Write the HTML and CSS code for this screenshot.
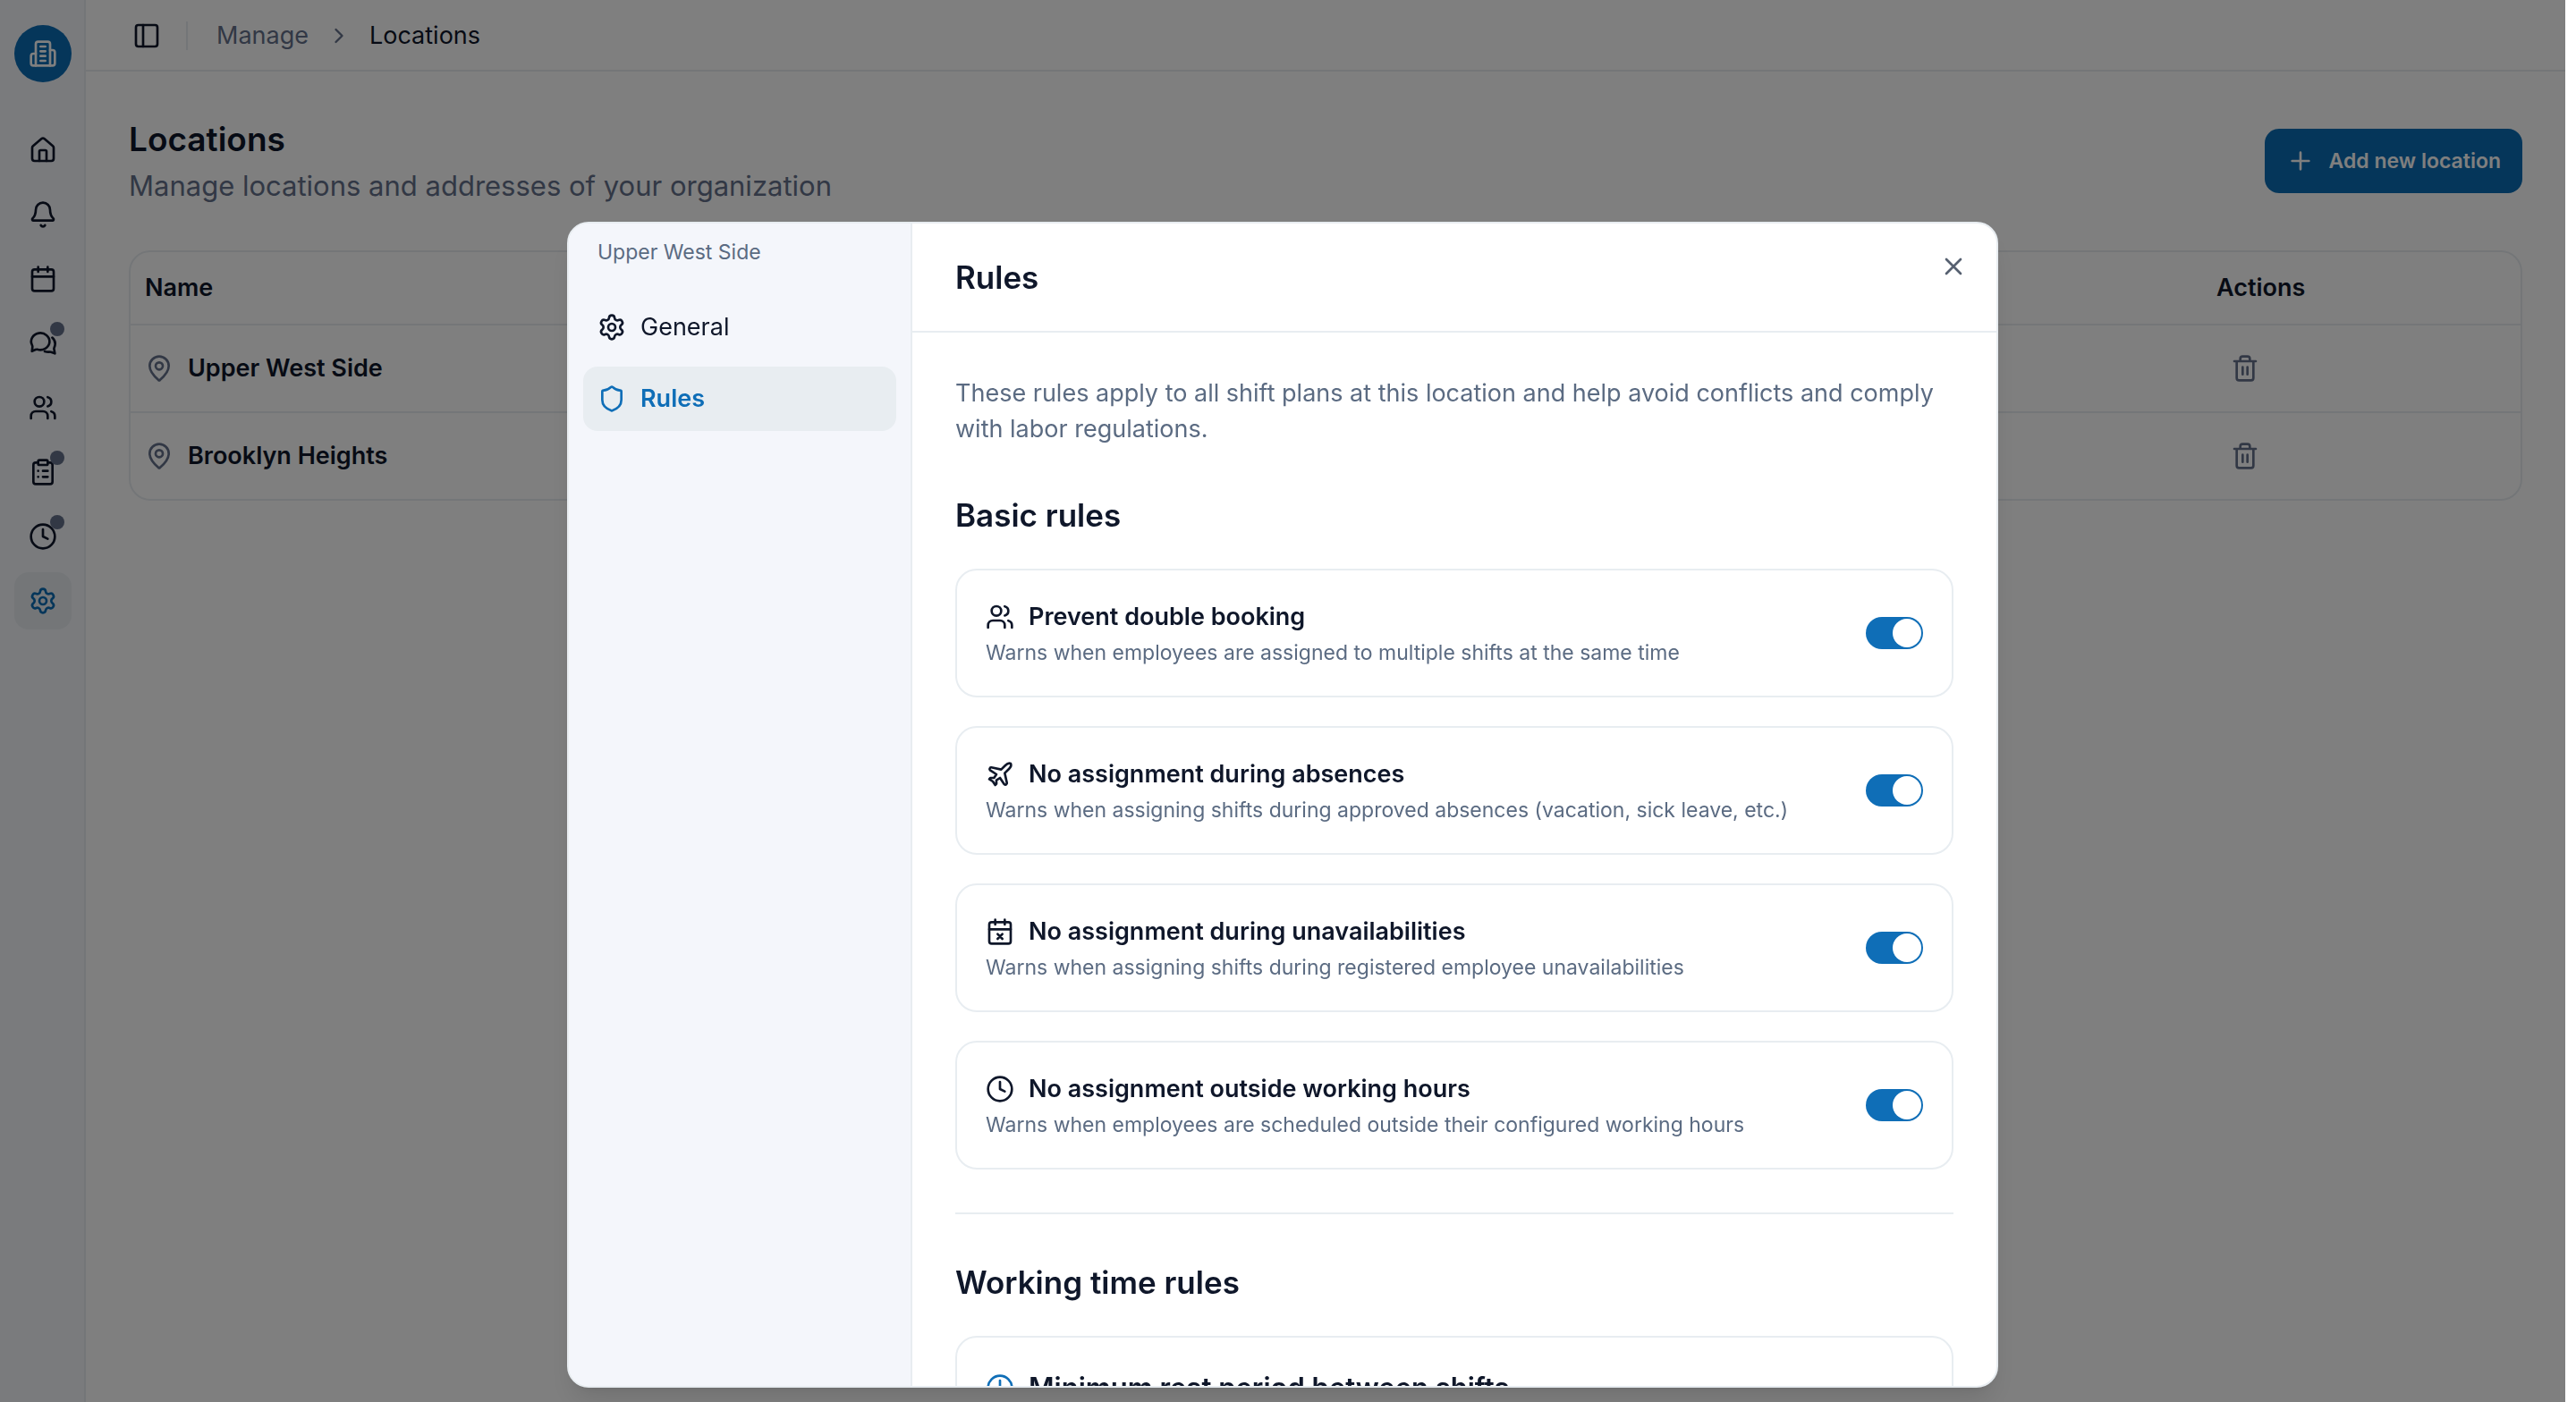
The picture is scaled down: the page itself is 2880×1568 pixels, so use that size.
FILE: index.html
```html
<!DOCTYPE html>
<html lang="en">
<head>
  <meta charset="UTF-8">
  <title>Locations</title>
  <link rel="stylesheet" href="styles.css">
</head>
<body>

<!-- shared icons -->
<svg class="sprite" aria-hidden="true">
  <symbol id="i-building" viewBox="0 0 24 24">
    <path d="M6 22V4a2 2 0 0 1 2-2h8a2 2 0 0 1 2 2v18Z"/>
    <path d="M6 12H4a2 2 0 0 0-2 2v6a2 2 0 0 0 2 2h2"/>
    <path d="M18 9h2a2 2 0 0 1 2 2v9a2 2 0 0 1-2 2h-2"/>
    <path d="M10 6h4M10 10h4M10 14h4M10 18h4"/>
  </symbol>
  <symbol id="i-home" viewBox="0 0 24 24">
    <path d="M15 21v-8a1 1 0 0 0-1-1h-4a1 1 0 0 0-1 1v8"/>
    <path d="M3 10a2 2 0 0 1 .709-1.528l7-5.999a2 2 0 0 1 2.582 0l7 5.999A2 2 0 0 1 21 10v9a2 2 0 0 1-2 2H5a2 2 0 0 1-2-2z"/>
  </symbol>
  <symbol id="i-bell" viewBox="0 0 24 24">
    <path d="M10.268 21a2 2 0 0 0 3.464 0"/>
    <path d="M3.262 15.326A1 1 0 0 0 4 17h16a1 1 0 0 0 .74-1.673C19.41 13.956 18 12.499 18 8A6 6 0 0 0 6 8c0 4.499-1.411 5.956-2.738 7.326"/>
  </symbol>
  <symbol id="i-calendar" viewBox="0 0 24 24">
    <path d="M8 2v4M16 2v4M3 10h18"/>
    <rect width="18" height="18" x="3" y="4" rx="2"/>
  </symbol>
  <symbol id="i-calendar-x" viewBox="0 0 24 24">
    <path d="M8 2v4M16 2v4M3 10h18M14 14l-4 4M10 14l4 4"/>
    <rect width="18" height="18" x="3" y="4" rx="2"/>
  </symbol>
  <symbol id="i-chat" viewBox="0 0 24 24">
    <path d="M7.2 17.1a7.7 7.1 0 1 0-4.3-3.6c.3.6.4 1 .3 1.6L2.8 18.6l3-1.3c.5-.2.9-.3 1.4-.2z"/>
    <path d="M19.8 7.2a7.3 7.3 0 0 1 1.7 8.3c-.3.7-.3 1.1-.1 1.7l.6 3.3-3.2-1.2c-.5-.2-.9-.2-1.4-.1a9 9 0 0 1-3.9-.4"/>
  </symbol>
  <symbol id="i-users" viewBox="0 0 24 24">
    <path d="M16 21v-2a4 4 0 0 0-4-4H6a4 4 0 0 0-4 4v2"/>
    <path d="M16 3.128a4 4 0 0 1 0 7.744M22 21v-2a4 4 0 0 0-3-3.87"/>
    <circle cx="9" cy="7" r="4"/>
  </symbol>
  <symbol id="i-clipboard" viewBox="0 0 24 24">
    <rect width="8" height="4" x="8" y="2" rx="1"/>
    <path d="M16 4h2a2 2 0 0 1 2 2v14a2 2 0 0 1-2 2H6a2 2 0 0 1-2-2V6a2 2 0 0 1 2-2h2"/>
    <path d="M12 11h4M12 16h4M8 11h.01M8 16h.01"/>
  </symbol>
  <symbol id="i-clock" viewBox="0 0 24 24">
    <circle cx="12" cy="12" r="10"/>
    <path d="M12 6v6l4 2"/>
  </symbol>
  <symbol id="i-settings" viewBox="0 0 24 24">
    <path d="M9.671 4.136a2.34 2.34 0 0 1 4.659 0 2.34 2.34 0 0 0 3.319 1.915 2.34 2.34 0 0 1 2.33 4.033 2.34 2.34 0 0 0 0 3.831 2.34 2.34 0 0 1-2.33 4.033 2.34 2.34 0 0 0-3.319 1.915 2.34 2.34 0 0 1-4.659 0 2.34 2.34 0 0 0-3.32-1.915 2.34 2.34 0 0 1-2.33-4.033 2.34 2.34 0 0 0 0-3.831A2.34 2.34 0 0 1 6.35 6.051a2.34 2.34 0 0 0 3.319-1.915"/>
    <circle cx="12" cy="12" r="3"/>
  </symbol>
  <symbol id="i-panel" viewBox="0 0 24 24">
    <rect width="18" height="18" x="3" y="3" rx="2"/>
    <path d="M9 3v18"/>
  </symbol>
  <symbol id="i-chevron" viewBox="0 0 24 24"><path d="m9 18 6-6-6-6"/></symbol>
  <symbol id="i-plus" viewBox="0 0 24 24"><path d="M5 12h14M12 5v14"/></symbol>
  <symbol id="i-close" viewBox="0 0 24 24"><path d="M18 6 6 18M6 6l12 12"/></symbol>
  <symbol id="i-pin" viewBox="0 0 24 24">
    <path d="M20 10c0 4.993-5.539 10.193-7.399 11.799a1 1 0 0 1-1.202 0C9.539 20.193 4 14.993 4 10a8 8 0 0 1 16 0"/>
    <circle cx="12" cy="10" r="3"/>
  </symbol>
  <symbol id="i-trash" viewBox="0 0 24 24">
    <path d="M3 6h18M19 6v14a2 2 0 0 1-2 2H7a2 2 0 0 1-2-2V6M8 6V4a2 2 0 0 1 2-2h4a2 2 0 0 1 2 2v2M10 11v6M14 11v6"/>
  </symbol>
  <symbol id="i-shield" viewBox="0 0 24 24">
    <path d="M20 13c0 5-3.5 7.5-7.66 8.95a1 1 0 0 1-.67-.01C7.5 20.5 4 18 4 13V6a1 1 0 0 1 1-1c2 0 4.5-1.2 6.24-2.72a1.17 1.17 0 0 1 1.52 0C14.51 3.81 17 5 19 5a1 1 0 0 1 1 1z"/>
  </symbol>
  <symbol id="i-plane" viewBox="0 0 24 24">
    <path d="M17.8 19.2 16 11l3.5-3.5C21 6 21.5 4 21 3c-1-.5-3 0-4.5 1.5L13 8 4.8 6.2c-.5-.1-.9.1-1.1.5l-.3.5c-.2.5-.1 1 .3 1.3L9 12l-2 3H4l-1 1 3 2 2 3 1-1v-3l3-2 3.5 5.3c.3.4.8.5 1.3.3l.5-.2c.4-.3.6-.7.5-1.2z"/>
  </symbol>
</svg>

<div class="app">
  <nav class="sidebar" aria-label="Main">
    <a href="#" class="logo" aria-label="Organization"><svg class="icon"><use href="#i-building"/></svg></a>
    <div class="sidebar-menu">
      <a href="#" class="sidebar-item" aria-label="Home"><svg class="icon"><use href="#i-home"/></svg></a>
      <a href="#" class="sidebar-item" aria-label="Notifications"><svg class="icon"><use href="#i-bell"/></svg></a>
      <a href="#" class="sidebar-item" aria-label="Calendar"><svg class="icon"><use href="#i-calendar"/></svg></a>
      <a href="#" class="sidebar-item has-dot" aria-label="Messages"><svg class="icon"><use href="#i-chat"/></svg></a>
      <a href="#" class="sidebar-item" aria-label="Employees"><svg class="icon"><use href="#i-users"/></svg></a>
      <a href="#" class="sidebar-item has-dot" aria-label="Tasks"><svg class="icon"><use href="#i-clipboard"/></svg></a>
      <a href="#" class="sidebar-item has-dot" aria-label="Time"><svg class="icon"><use href="#i-clock"/></svg></a>
      <a href="#" class="sidebar-item active" aria-label="Manage"><svg class="icon"><use href="#i-settings"/></svg></a>
    </div>
  </nav>

  <div class="content">
    <header class="topbar">
      <button type="button" class="icon-btn" aria-label="Toggle sidebar"><svg class="icon"><use href="#i-panel"/></svg></button>
      <span class="topbar-line"></span>
      <a href="#" class="crumb">Manage</a>
      <svg class="icon icon-sm"><use href="#i-chevron"/></svg>
      <span class="crumb current">Locations</span>
    </header>

    <main class="page">
      <div class="page-head">
        <div>
          <h1>Locations</h1>
          <p>Manage locations and addresses of your organization</p>
        </div>
        <button type="button" class="btn-primary"><svg class="icon"><use href="#i-plus"/></svg>Add new location</button>
      </div>

      <div class="table-wrap">
        <table>
          <thead>
            <tr><th>Name</th><th class="col-actions">Actions</th></tr>
          </thead>
          <tbody>
            <tr>
              <td><div class="location"><svg class="icon"><use href="#i-pin"/></svg>Upper West Side</div></td>
              <td><button type="button" class="icon-btn delete" aria-label="Delete"><svg class="icon"><use href="#i-trash"/></svg></button></td>
            </tr>
            <tr>
              <td><div class="location"><svg class="icon"><use href="#i-pin"/></svg>Brooklyn Heights</div></td>
              <td><button type="button" class="icon-btn delete" aria-label="Delete"><svg class="icon"><use href="#i-trash"/></svg></button></td>
            </tr>
          </tbody>
        </table>
      </div>
    </main>
  </div>
</div>

<div class="overlay">
  <div class="modal" role="dialog" aria-modal="true" aria-labelledby="modal-title">
    <aside class="modal-side">
      <div class="modal-side-label">Upper West Side</div>
      <nav class="modal-nav" aria-label="Location settings">
        <a href="#"><svg class="icon"><use href="#i-settings"/></svg>General</a>
        <a href="#" class="active"><svg class="icon"><use href="#i-shield"/></svg>Rules</a>
      </nav>
    </aside>

    <section class="modal-main">
      <header class="modal-head">
        <h2 id="modal-title">Rules</h2>
        <button type="button" class="modal-close" aria-label="Close"><svg class="icon"><use href="#i-close"/></svg></button>
      </header>

      <div class="modal-body">
        <p class="intro">These rules apply to all shift plans at this location and help avoid conflicts and comply with labor regulations.</p>

        <section class="rules">
          <h3>Basic rules</h3>

          <div class="rule">
            <div class="rule-text">
              <label for="rule-double" class="rule-title"><svg class="icon"><use href="#i-users"/></svg>Prevent double booking</label>
              <p>Warns when employees are assigned to multiple shifts at the same time</p>
            </div>
            <input type="checkbox" class="switch" id="rule-double" checked>
          </div>

          <div class="rule">
            <div class="rule-text">
              <label for="rule-absence" class="rule-title"><svg class="icon"><use href="#i-plane"/></svg>No assignment during absences</label>
              <p>Warns when assigning shifts during approved absences (vacation, sick leave, etc.)</p>
            </div>
            <input type="checkbox" class="switch" id="rule-absence" checked>
          </div>

          <div class="rule">
            <div class="rule-text">
              <label for="rule-unavailable" class="rule-title"><svg class="icon"><use href="#i-calendar-x"/></svg>No assignment during unavailabilities</label>
              <p>Warns when assigning shifts during registered employee unavailabilities</p>
            </div>
            <input type="checkbox" class="switch" id="rule-unavailable" checked>
          </div>

          <div class="rule">
            <div class="rule-text">
              <label for="rule-hours" class="rule-title"><svg class="icon"><use href="#i-clock"/></svg>No assignment outside working hours</label>
              <p>Warns when employees are scheduled outside their configured working hours</p>
            </div>
            <input type="checkbox" class="switch" id="rule-hours" checked>
          </div>
        </section>

        <hr>

        <section class="rules">
          <h3>Working time rules</h3>

          <div class="rule">
            <h4 class="rule-heading"><svg class="icon"><use href="#i-clock"/></svg>Minimum rest period between shifts</h4>
          </div>
        </section>
      </div>
    </section>
  </div>
</div>

</body>
</html>
```
FILE: styles.css
```css
* {
  box-sizing: border-box;
}

html,
body {
  height: 100%;
}

body {
  margin: 0;
  padding-right: 12px;
  overflow: hidden;
  background: #fff;
  color: #0f172a;
  font-family: Inter, "Liberation Sans", sans-serif;
  font-size: 27px;
  line-height: 40px;
}

h1, h2, h3, h4, p {
  margin: 0;
}

a {
  color: inherit;
  text-decoration: none;
}

button {
  padding: 0;
  border: none;
  background: none;
  color: inherit;
  font: inherit;
  cursor: pointer;
}

.sprite {
  display: none;
}

.icon {
  flex: none;
  display: block;
  width: 32px;
  height: 32px;
  fill: none;
  stroke: currentColor;
  stroke-width: 2;
  stroke-linecap: round;
  stroke-linejoin: round;
}

.icon-sm {
  width: 28px;
  height: 28px;
}

.icon-btn {
  display: flex;
  align-items: center;
  justify-content: center;
  width: 56px;
  height: 56px;
}

/* page */

.app {
  display: flex;
  min-height: 100%;
}

.sidebar {
  flex: none;
  width: 96px;
  padding: 28px 14px 28px 16px;
  border-right: 2px solid #e8edf1;
  background: #f4f6fb;
}

.logo {
  display: flex;
  align-items: center;
  justify-content: center;
  width: 64px;
  height: 64px;
  border-radius: 50%;
  background: #0b6cb4;
  color: #fff;
}

.sidebar-menu {
  display: flex;
  flex-direction: column;
  gap: 8px;
  margin-top: 44px;
}

.sidebar-item {
  position: relative;
  display: flex;
  align-items: center;
  justify-content: center;
  width: 64px;
  height: 64px;
  border-radius: 16px;
}

.sidebar-item.active {
  background: #e8edf1;
  color: #0b6cb4;
}

.has-dot::after {
  content: "";
  position: absolute;
  top: 8px;
  right: 8px;
  width: 16px;
  height: 16px;
  border-radius: 50%;
  background: #64708a;
}

.content {
  flex: 1;
  min-width: 0;
}

.topbar {
  display: flex;
  align-items: center;
  height: 80px;
  padding: 2px 0 0 40px;
  border-bottom: 2px solid #e8edf1;
  color: #64708a;
}

.topbar .icon-btn,
.crumb.current {
  color: #0f172a;
}

.topbar-line {
  width: 2px;
  height: 32px;
  margin: 0 32px 0 16px;
  background: #e8edf1;
}

.topbar .icon-sm {
  margin: 0 20px;
}

.page {
  padding: 48px;
}

.page-head {
  display: flex;
  align-items: center;
  justify-content: space-between;
  margin-bottom: 48px;
}

h1 {
  font-size: 37px;
  font-weight: 600;
  line-height: 56px;
}

.page-head p {
  color: #64708a;
  font-size: 31px;
  line-height: 48px;
}

.btn-primary {
  display: flex;
  align-items: center;
  gap: 16px;
  height: 72px;
  padding: 0 24px;
  border-radius: 16px;
  background: #0b6cb4;
  color: #fff;
  font-size: 23px;
  font-weight: 600;
}

.table-wrap {
  border: 2px solid #e8edf1;
  border-radius: 24px;
}

table {
  width: 100%;
  border-collapse: separate;
  border-spacing: 0;
  text-align: left;
}

th,
td {
  height: 98px;
  padding: 0 16px;
  border-bottom: 2px solid #e8edf1;
  font-weight: 600;
}

th {
  height: 82px;
}

tr:last-child td {
  height: 96px;
  border-bottom: none;
}

.col-actions {
  width: 356px;
}

.location {
  display: flex;
  align-items: center;
  gap: 16px;
}

.location .icon,
.delete {
  color: #64708a;
}

.delete {
  width: 64px;
  height: 64px;
}

/* modal */

.overlay {
  position: fixed;
  top: 0;
  right: 12px;
  bottom: 0;
  left: 0;
  display: flex;
  justify-content: center;
  padding: 248px 32px 16px;
  background: rgba(0, 0, 0, 0.5);
}

.modal {
  display: flex;
  width: 100%;
  max-width: 1600px;
  border: 2px solid #e8edf1;
  border-radius: 24px;
  overflow: hidden;
  background: #fff;
  box-shadow: 0 20px 30px -6px rgba(0, 0, 0, 0.1), 0 8px 12px -8px rgba(0, 0, 0, 0.1);
}

.modal-side {
  flex: none;
  width: 384px;
  padding: 0 16px;
  border-right: 2px solid #e8edf1;
  background: #f4f6fb;
}

.modal-side-label {
  padding: 0 16px;
  color: #5b6b82;
  font-size: 23px;
  line-height: 64px;
}

.modal-nav {
  display: flex;
  flex-direction: column;
  gap: 8px;
  margin-top: 16px;
}

.modal-nav a {
  display: flex;
  align-items: center;
  gap: 16px;
  height: 72px;
  padding: 0 16px;
  border-radius: 16px;
}

.modal-nav .active {
  background: #e8edf1;
  color: #0f6eb7;
  font-weight: 600;
}

.modal-main {
  flex: 1;
  display: flex;
  flex-direction: column;
  min-width: 0;
}

.modal-head {
  position: relative;
  flex: none;
  display: flex;
  align-items: center;
  height: 122px;
  padding: 0 48px;
  border-bottom: 2px solid #e8edf1;
}

h2,
h3 {
  font-size: 35px;
  font-weight: 600;
  line-height: 56px;
}

.modal-close {
  position: absolute;
  top: 32px;
  right: 32px;
  color: #566070;
}

.modal-body {
  flex: 1;
  padding: 48px;
  overflow: hidden;
}

.intro {
  margin-bottom: 48px;
  color: #5b6b82;
}

.rules {
  display: flex;
  flex-direction: column;
  gap: 32px;
}

.rule {
  display: flex;
  align-items: center;
  justify-content: space-between;
  padding: 32px;
  border: 2px solid #e8edf1;
  border-radius: 24px;
}

.rule-title,
.rule-heading {
  display: flex;
  align-items: center;
  gap: 16px;
  font-weight: 600;
}

.rule-text p {
  margin-top: 4px;
  color: #5b6b82;
  font-size: 23px;
  line-height: 32px;
}

.rule-heading {
  font-size: 31px;
  line-height: 48px;
}

.rule-heading .icon {
  color: #0f6eb7;
}

.switch {
  appearance: none;
  flex: none;
  width: 64px;
  height: 36px;
  margin: 0;
  padding: 2px;
  border-radius: 18px;
  background: #d5dce4;
  cursor: pointer;
}

.switch::before {
  content: "";
  display: block;
  width: 32px;
  height: 32px;
  border-radius: 50%;
  background: #fff;
}

.switch:checked {
  background: #0f6eb7;
}

.switch:checked::before {
  margin-left: auto;
}

hr {
  height: 2px;
  margin: 48px 0;
  border: none;
  background: #e8edf1;
}
```
